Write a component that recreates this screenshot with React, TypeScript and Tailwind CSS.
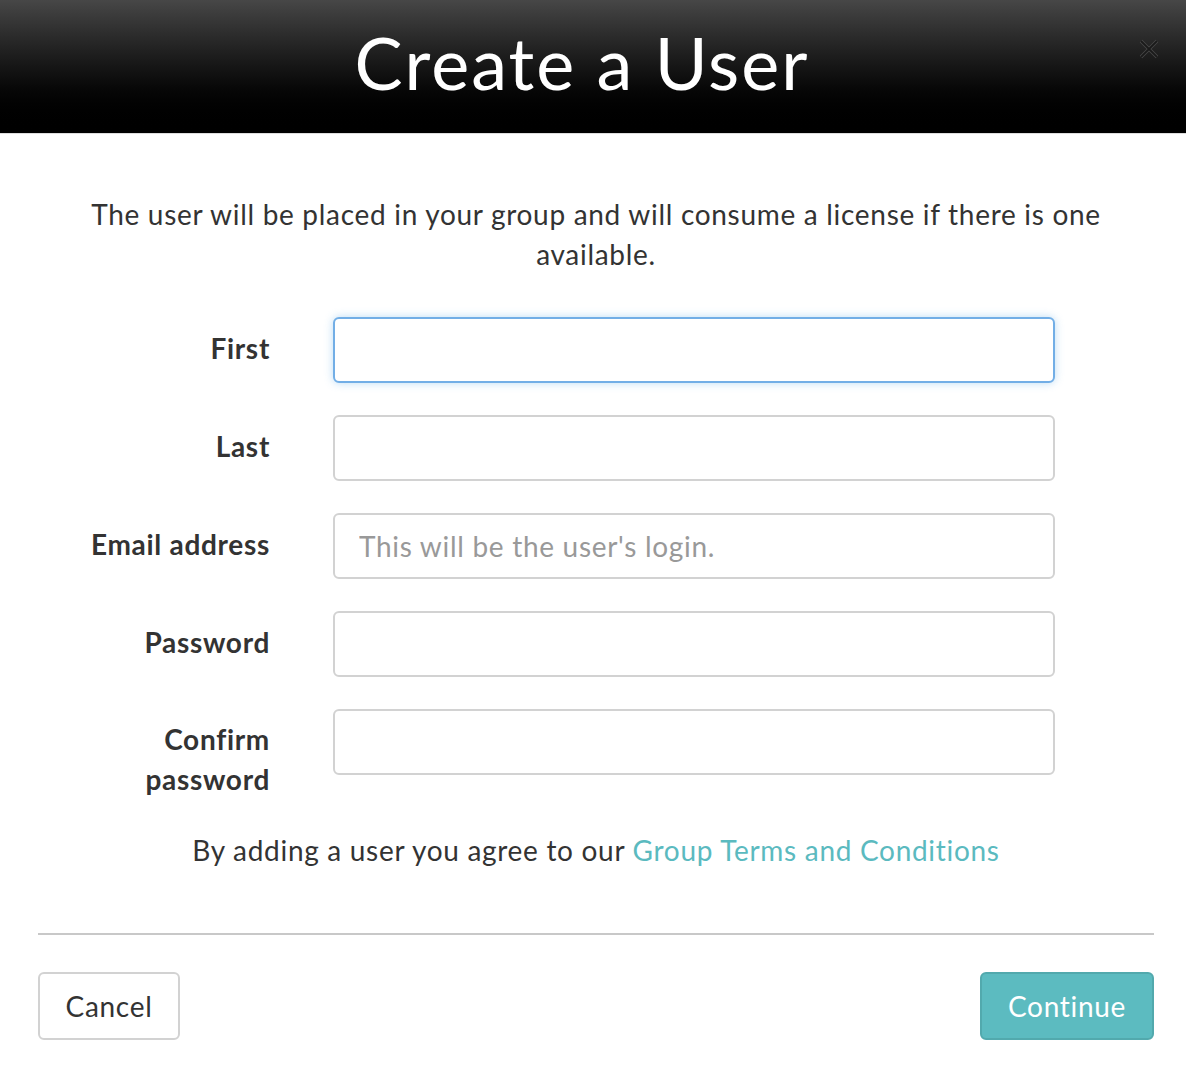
import React from 'react';

const fields = [
  { label: 'First', placeholder: '', focused: true },
  { label: 'Last', placeholder: '' },
  { label: 'Email address', placeholder: "This will be the user's login." },
  { label: 'Password', placeholder: '', type: 'password' },
  { label: 'Confirm password', placeholder: '', type: 'password', wrap: true },
];

export default function App() {
  return (
    <div className="w-[1186px] h-[1074px] bg-white text-[#333] font-['Lato',sans-serif] text-[28px] tracking-[0.7px]">
      {/* header */}
      <div className="relative h-[134px] bg-gradient-to-b from-[#474747] to-[#000] flex items-center justify-center border-b border-[#ddd]">
        <h1 className="text-[72px] leading-none text-white tracking-[2px] pb-[10px] mr-[22px]">Create a User</h1>
        <button className="absolute right-[24px] top-[36px] w-[26px] h-[26px] flex items-center justify-center">
          <svg width="22" height="22" viewBox="0 0 22 22">
            <path d="M3 3 L19 19 M19 3 L3 19" stroke="#4a4a4a" strokeWidth="3.5" />
            <path d="M3 3 L19 19 M19 3 L3 19" stroke="#1a1a1a" strokeWidth="1.8" />
          </svg>
        </button>
      </div>

      <div className="pl-[38px] pr-[32px]">
        <p className="mt-[60px] text-center leading-[40px] px-[40px]">
          The user will be placed in your group and will consume a license if there is one available.
        </p>

        <div className="mt-[43px] grid grid-cols-[232px_722px] gap-x-[63px] gap-y-[32px] items-start">
          {fields.map(f => (
            <React.Fragment key={f.label}>
              <label className={`text-right font-bold leading-[40px] ${f.wrap ? 'pt-[10px] pl-[60px]' : 'pt-[11px]'}`}>
                {f.label}
              </label>
              <input
                type={f.type || 'text'}
                placeholder={f.placeholder}
                className={`h-[66px] rounded-[6px] px-[24px] text-[28px] tracking-[0.7px] text-[#333] placeholder:text-[#999] outline-none bg-white ${
                  f.focused
                    ? 'border-2 border-[#72aee6] shadow-[0_0_8px_rgba(102,175,233,0.45)]'
                    : 'border-2 border-[#d2d2d2]'
                }`}
              />
            </React.Fragment>
          ))}
        </div>

        <p className="mt-[31px] text-center leading-[40px]">
          By adding a user you agree to our <a className="text-[#5bbabf]">Group Terms and Conditions</a>
        </p>

        <div className="mt-[63px] border-t-2 border-[#c8c8c8]" />

        <div className="mt-[37px] flex justify-between">
          <button className="w-[142px] h-[68px] rounded-[6px] border-2 border-[#d2d2d2] bg-white text-[#333]">
            Cancel
          </button>
          <button className="w-[174px] h-[68px] rounded-[6px] border-2 border-[#52a9ad] bg-[#5cbbc0] text-white">
            Continue
          </button>
        </div>
      </div>
    </div>
  );
}
